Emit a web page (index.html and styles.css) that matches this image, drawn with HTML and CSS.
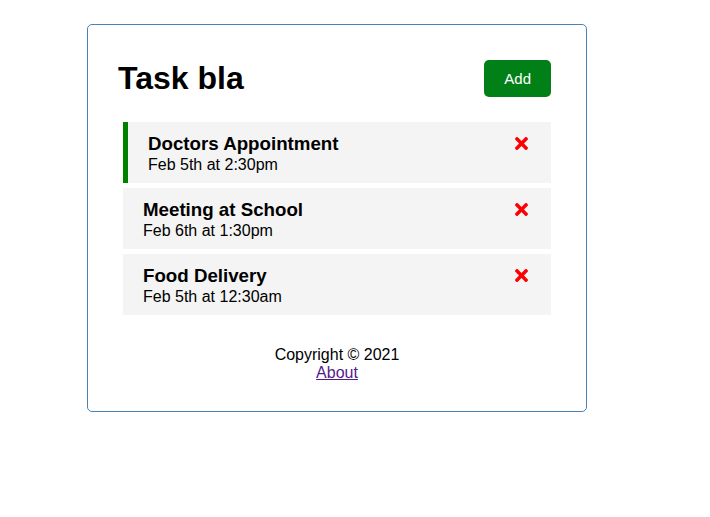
FILE: index.html
```html
<!DOCTYPE html>
<html lang="en">
<head>
<meta charset="utf-8">
<title>Task Tracker</title>
<link rel="stylesheet" href="styles.css">
</head>
<body>
<div class="container">
  <header class="header">
    <h1 class="title">Task bla</h1>
    <button class="btn">Add</button>
  </header>
  <div class="tasks">
    <div class="task reminder">
      <h3 class="task-title">Doctors Appointment
        <svg class="del" viewBox="0 0 352 512"><path fill="currentColor" d="M242.72 256l100.07-100.07c12.28-12.28 12.28-32.19 0-44.48l-22.24-22.24c-12.28-12.28-32.19-12.28-44.48 0L176 189.28 75.93 89.21c-12.28-12.28-32.19-12.28-44.48 0L9.21 111.45c-12.28 12.28-12.28 32.19 0 44.48L109.28 256 9.21 356.07c-12.28 12.28-12.28 32.19 0 44.48l22.24 22.24c12.28 12.28 32.2 12.28 44.48 0L176 322.72l100.07 100.07c12.28 12.28 32.2 12.28 44.48 0l22.24-22.24c12.28-12.28 12.28-32.19 0-44.48L242.72 256z"/></svg>
      </h3>
      <p class="task-day">Feb 5th at 2:30pm</p>
    </div>
    <div class="task">
      <h3 class="task-title">Meeting at School
        <svg class="del" viewBox="0 0 352 512"><path fill="currentColor" d="M242.72 256l100.07-100.07c12.28-12.28 12.28-32.19 0-44.48l-22.24-22.24c-12.28-12.28-32.19-12.28-44.48 0L176 189.28 75.93 89.21c-12.28-12.28-32.19-12.28-44.48 0L9.21 111.45c-12.28 12.28-12.28 32.19 0 44.48L109.28 256 9.21 356.07c-12.28 12.28-12.28 32.19 0 44.48l22.24 22.24c12.28 12.28 32.2 12.28 44.48 0L176 322.72l100.07 100.07c12.28 12.28 32.2 12.28 44.48 0l22.24-22.24c12.28-12.28 12.28-32.19 0-44.48L242.72 256z"/></svg>
      </h3>
      <p class="task-day">Feb 6th at 1:30pm</p>
    </div>
    <div class="task">
      <h3 class="task-title">Food Delivery
        <svg class="del" viewBox="0 0 352 512"><path fill="currentColor" d="M242.72 256l100.07-100.07c12.28-12.28 12.28-32.19 0-44.48l-22.24-22.24c-12.28-12.28-32.19-12.28-44.48 0L176 189.28 75.93 89.21c-12.28-12.28-32.19-12.28-44.48 0L9.21 111.45c-12.28 12.28-12.28 32.19 0 44.48L109.28 256 9.21 356.07c-12.28 12.28-12.28 32.19 0 44.48l22.24 22.24c12.28 12.28 32.2 12.28 44.48 0L176 322.72l100.07 100.07c12.28 12.28 32.2 12.28 44.48 0l22.24-22.24c12.28-12.28 12.28-32.19 0-44.48L242.72 256z"/></svg>
      </h3>
      <p class="task-day">Feb 5th at 12:30am</p>
    </div>
  </div>
  <footer class="footer">
    <p>Copyright &copy; 2021</p>
    <a class="about" href="#about">About</a>
  </footer>
</div>
</body>
</html>
```
FILE: styles.css
```css
* {
  box-sizing: border-box;
  margin: 0;
  padding: 0;
}

body {
  font-family: "Liberation Sans", Arial, Helvetica, sans-serif;
  color: #000;
  background: #fff;
}

.container {
  width: 500px;
  min-height: 300px;
  margin: 24px 0 0 87px;
  padding: 30px 30px 29px;
  border: 1px solid steelblue;
  border-radius: 5px;
}

.header {
  display: flex;
  justify-content: space-between;
  align-items: center;
  margin-bottom: 20px;
}

.title {
  font-size: 32px;
  font-weight: bold;
}

.btn {
  display: inline-block;
  background: #008016;
  color: #fff;
  border: none;
  padding: 10px 20px;
  margin: 5px;
  border-radius: 5px;
  font-family: inherit;
  font-size: 15px;
  line-height: 17px;
  cursor: pointer;
}

.tasks {
  display: flex;
  flex-direction: column;
  gap: 5px;
  margin: 0 5px;
}

.task {
  background: #f4f4f4;
  padding: 11px 20px 9px;
  min-height: 61px;
}

.task.reminder {
  border-left: 5px solid green;
}

.task-title {
  display: flex;
  justify-content: space-between;
  align-items: center;
  font-size: 18.72px;
  line-height: 22px;
  font-weight: bold;
}

.del {
  width: 13px;
  height: 19px;
  color: red;
  margin: 0 3px 2px 0;
}

.task-day {
  font-size: 16px;
  line-height: 19px;
}

.footer {
  margin-top: 31px;
  text-align: center;
  font-size: 16px;
  line-height: 18px;
}

.about {
  color: #551a8b;
  text-decoration: underline;
}
```
